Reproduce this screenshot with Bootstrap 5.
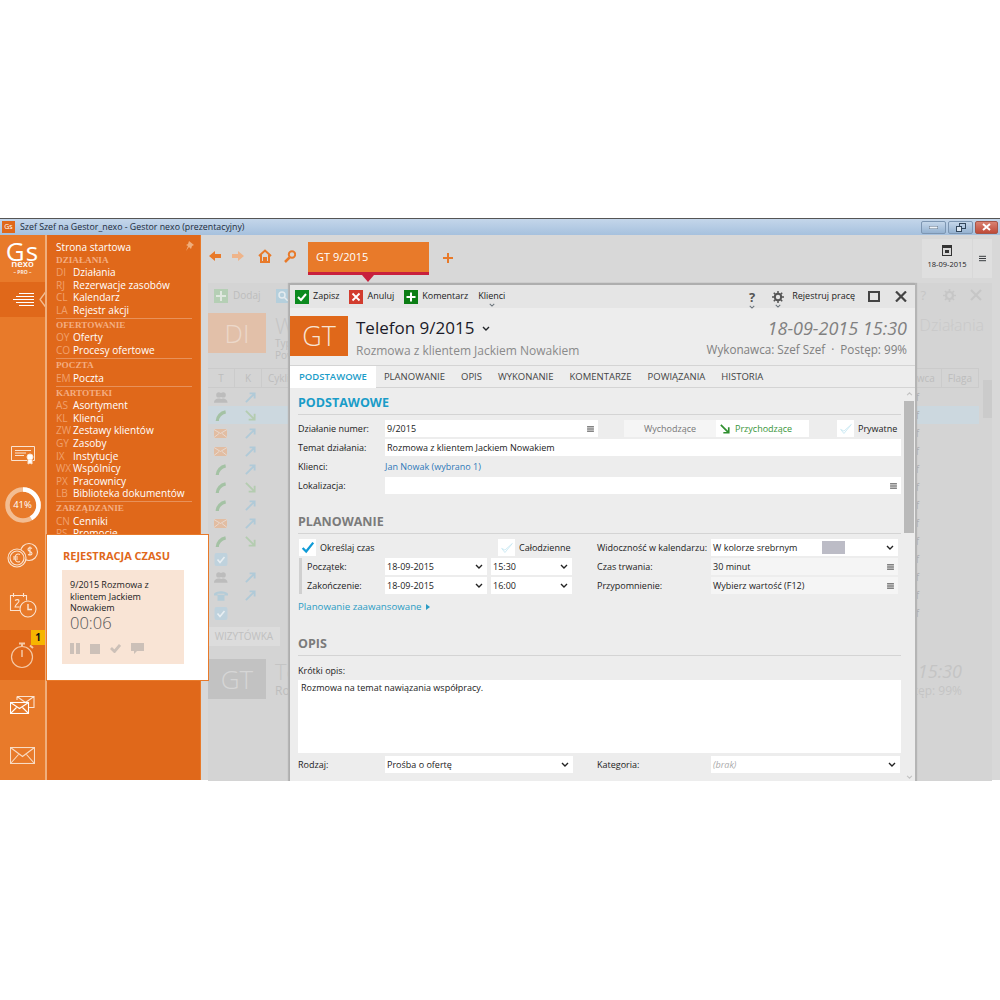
<!DOCTYPE html>
<html lang="pl">

<head>
    <meta charset="UTF-8">
    <meta name="viewport" content="width=device-width, initial-scale=1.0">
    <title>Gestor nexo</title>
    <link href="https://cdn.jsdelivr.net/npm/bootstrap@5.3.2/dist/css/bootstrap.min.css" rel="stylesheet">
    <style>
        body {
            background: #fff;
            font-family: "Open Sans", "Liberation Sans", sans-serif;
            font-size: 9px;
            line-height: 1.2;
            color: #222;
        }

        .app-win {
            margin-top: 218px;
            height: 563px;
            overflow: hidden;
        }

        /* title bar */
        .win-title {
            height: 17px;
            border-top: 1px solid #555;
            background: linear-gradient(#c4d6ea, #a6c1de);
            padding-left: 2px;
            font-size: 8.8px;
            color: #1c2a3a;
        }

        .gs-ico {
            width: 13px;
            height: 12px;
            background: #e0681a;
            color: #fff;
            font-size: 7px;
            line-height: 12px;
            text-align: center;
            margin-right: 5px;
        }

        .win-btn {
            height: 13px;
            margin-right: 2px;
            border: 1px solid #7d96b2;
            border-radius: 2px;
            background: linear-gradient(#c5d7ea, #95b2d1);
        }

        .win-btn.w25 { width: 25px; }
        .win-btn.w-close { width: 23px; background: linear-gradient(#d98272, #bf4a38); border-color: #a65648; }

        /* left rail */
        .main-row { height: 545px; }

        .rail {
            width: 45px;
            background: #e87a2a;
            flex: none;
        }

        .rail-logo {
            height: 47px;
            color: #fff;
            text-align: center;
            padding-top: 7px;
        }

        .logo-gs { font-size: 26px; line-height: 18px; letter-spacing: 1px; }
        .logo-nx { font-size: 9.5px; line-height: 8px; font-weight: 600; }
        .logo-pro { font-size: 5px; line-height: 8px; font-weight: 700; opacity: .85; }

        .rail-burger {
            height: 35px;
            background: #e0681a;
            position: relative;
        }

        .rail-notch {
            position: absolute;
            right: -2px;
            top: 9px;
        }

        .rail-item {
            height: 50px;
            position: relative;
        }

        .rail-item.on { background: #e0681a; }

        .rail-badge {
            position: absolute;
            right: 0;
            top: 0;
            width: 14px;
            height: 15px;
            background: #f7b500;
            color: #111;
            font-weight: 700;
            font-size: 10px;
            line-height: 15px;
            text-align: center;
        }

        .rail-pct {
            position: absolute;
            inset: 0;
            color: #fff;
            font-size: 9.5px;
            line-height: 50px;
            text-align: center;
        }

        /* orange menu */
        .menu-col {
            width: 155px;
            flex: none;
            background: #e0681a;
            border-left: 2px solid #f0ae7c;
            padding: 6px 8px 0 9px;
            color: #fff;
            font-size: 10.1px;
            line-height: 12.55px;
            overflow: hidden;
            position: relative;
        }

        .menu-pin { position: absolute; right: 6px; top: 6px; }

        .menu-grp {
            border-bottom: 1px solid #e8915a;
            padding-bottom: 1.6px;
        }

        .menu-grp:last-child { border: 0; }

        .menu-h {
            font-family: "Liberation Serif", serif;
            font-weight: 700;
            font-size: 9.2px;
            color: #f4ae82;
        }

        .menu-code {
            width: 17px;
            color: #f0a06c;
            flex: none;
        }

        /* time popup */
        .time-pop {
            position: absolute;
            left: 46px;
            top: 316px;
            width: 163px;
            height: 147px;
            background: #fff;
            border: 1px solid #e87a2a;
            padding: 14px 15px;
        }

        .time-h {
            color: #e0681a;
            font-weight: 700;
            font-size: 11px;
            line-height: 13px;
            margin: 0 0 8px 1px;
        }

        .time-card {
            width: 122px;
            height: 94px;
            background: #f9e4d5;
            padding: 9px 8px;
            font-size: 9px;
            line-height: 11.7px;
        }

        .time-val {
            font-size: 16.5px;
            line-height: 17px;
            font-weight: 300;
            color: #555;
        }

        .time-acts { margin-top: 12px; gap: 10px; }

        /* content */
        .cnt {
            position: relative;
            background: #d8d8d8;
            border-left: 1px solid #e87a2a;
            min-width: 0;
        }

        .top-bar {
            height: 48px;
            padding: 7px 8px 0 8px;
        }

        .t-nav { margin-right: 12px; margin-top: 8px; }

        .doc-tab {
            width: 121px;
            height: 33px;
            background: #e87a2a;
            border-bottom: 3px solid #c8203c;
            color: #fff;
            font-size: 11px;
            line-height: 30px;
            padding-left: 8px;
            position: relative;
        }

        .doc-tab::after {
            content: "";
            position: absolute;
            left: 54px;
            bottom: -10px;
            border: 6px solid transparent;
            border-bottom: 0;
            border-top: 7px solid #c8203c;
        }

        .date-box {
            width: 50px;
            height: 39px;
            margin: -3px 1px 0 0;
            background: #dfdfdf;
            font-size: 7.5px;
            text-align: center;
            padding-top: 6px;
        }

        .menu-box {
            width: 19px;
            height: 39px;
            margin-top: -3px;
            background: #dfdfdf;
        }

        /* dimmed page behind the dialog */
        .back-pane {
            margin: 0 8px 0 7px;
            height: 498px;
            background: #d4d4d4;
            color: #bdbdbd;
            overflow: hidden;
        }

        .back-bar { height: 30px; padding: 6px 6px 0 6px; font-size: 10px; }
        .back-sq { width: 14px; height: 14px; flex: none; margin-right: 5px; }
        .back-head { height: 55px; }
        .back-tile { width: 58px; height: 40px; background: #e2c0a9; color: #ecd8ca; font-size: 26px; line-height: 40px; text-align: center; font-weight: 300; flex: none; }
        .back-txt { margin-left: 9px; font-size: 10px; line-height: 12px; }
        .back-big { font-size: 22px; line-height: 24px; color: #c4c4c4; font-weight: 300; }
        .back-title { font-size: 16px; line-height: 24px; color: #c9c9c9; padding: 0 8px 0 0; font-weight: 300; }

        .grid-h {
            height: 20px;
            border-top: 1px solid #cbcbcb;
            border-bottom: 1px solid #cbcbcb;
            font-size: 10px;
            line-height: 18px;
            width: 771px;
        }

        .grid-h span { padding: 0 6px; border-right: 1px solid #cbcbcb; }
        .cell-t { width: 27px; text-align: center; padding: 0 !important; }

        .grid-row { height: 18px; width: 771px; padding-left: 6px; }
        .grid-row.sel { background: #ccd8df; }
        .row-t { width: 31px; }
        .row-f { margin-left: auto; margin-right: 60px; color: #aeaeae; font-size: 10px; }

        .back-scroll { width: 9px; margin-left: 4px; position: relative; }
        .back-thumb { height: 38px; background: #cbcbcb; margin-top: 12px; }

        .card-tab { height: 19px; width: 72px; background: #dcdcdc; color: #c0c0c0; font-size: 10px; line-height: 19px; text-align: center; margin-top: 5px; }
        .card-head { margin-top: 13px; }
        .card-right { text-align: right; padding-right: 30px; }

        /* dialog */
        .dlg {
            position: absolute;
            left: 88px;
            top: 48px;
            width: 626px;
            height: 498px;
            background: #ededed;
            border-top: 2px solid #aeaeae;
            border-left: 1px solid #aeaeae;
            box-shadow: -1px 0 1px #b5b5b5, 2px 0 1px #b5b5b5;
            overflow: hidden;
        }

        .dlg-bar {
            height: 23px;
            background: #e5e5e5;
            padding: 0 8px 0 5px;
        }

        .bar-sq {
            width: 14px;
            height: 14px;
            margin-right: 4px;
            flex: none;
        }

        .bar-txt { margin-right: 10px; font-size: 9px; }
        .has-chev { position: relative; }
        .chev-under { position: absolute; left: 50%; margin-left: -3px; bottom: -5px; }

        .dlg-head { height: 57px; padding-top: 8px; position: relative; }

        .dlg-tile {
            width: 58px;
            height: 40px;
            background: #e0681a;
            color: #f8e4d4;
            font-size: 27px;
            line-height: 40px;
            text-align: center;
            font-weight: 300;
            flex: none;
        }

        .dlg-title { font-size: 17px; line-height: 22px; color: #1a1a28; margin-top: 1px; }
        .dlg-sub { font-size: 12px; line-height: 15px; color: #8a8a8a; margin-top: 4px; }
        .dlg-right { margin-left: auto; text-align: right; padding-right: 8px; color: #808080; }
        .dlg-date { font-size: 18px; line-height: 22px; font-style: italic; margin-top: 1px; }
        .dlg-who { font-size: 11.7px; line-height: 15px; margin-top: 3px; }

        .tab-strip {
            height: 23px;
            border-top: 1px solid #d4d4d4;
            border-bottom: 1px solid #d4d4d4;
        }

        .tab-strip .nav-link {
            padding: 0 8px;
            color: #444;
            font-size: 9.5px;
            line-height: 21px;
            height: 22px;
        }

        .tab-strip .nav-link.active {
            background: #fff;
            color: #1a9cc8;
            font-weight: 600;
            padding: 0 9px;
        }

        .form-wrap { padding-left: 8px; width: 611px; flex: none; }

        .sec-h {
            height: 20px;
            margin-top: 7px;
            margin-bottom: 5px;
            border-bottom: 1px solid #d4d4d4;
            font-size: 12.5px;
            line-height: 15px;
            font-weight: 700;
            color: #7b7b7b;
        }

        .sec-h.first { color: #1a9cc8; }

        .f-row { height: 17px; margin-bottom: 2px; line-height: 18px; }
        .f-lbl { width: 87px; flex: none; color: #222; }
        .f-lbl-r { width: 114px; flex: none; }

        .fld {
            height: 17px;
            background: #fff;
            line-height: 17px;
            padding: 0 4px 0 2px;
            flex: none;
        }

        .fld.soft { background: #f5f5f5; }
        .w-213 { width: 213px; }
        .w-516 { width: 516px; }
        .w-102 { width: 102px; }
        .w-81 { width: 81px; }
        .w-188 { width: 188px; }
        .w-187 { width: 187px; }
        .w-189 { width: 189px; }

        .tog-box { width: 92px; text-align: center; line-height: 17px; height: 17px; background: #f5f5f5; color: #777; margin-left: 26px; }
        .tog-on { width: 93px; line-height: 17px; height: 17px; padding-left: 4px; gap: 5px; background: #fff; color: #3a963a; }

        .chk {
            width: 17px;
            height: 17px;
            background: #fff;
            flex: none;
            margin-right: 4px;
        }

        .chk-lead { padding-left: 1px; width: 200px; }
        .plan-left { width: 275px; margin-right: 24px; flex: none; }
        .plan-sub { border-left: 3px solid #d0d0d0; margin-left: 1px; padding-left: 5px; }
        .plan-sub .f-lbl { width: 78px; }
        .link-teal { color: #2a9cc4; font-size: 9.7px; line-height: 17px; margin-top: 4px; }
        .link-blue { color: #2e78b8; }

        .txt-area { height: 73px; background: #fff; width: 603px; padding: 3px; margin-bottom: 3px; }
        .swatch { width: 23px; height: 13px; background: #bcbcc6; margin-left: 25px; }
        .brak { color: #aaa; font-style: italic; }

        .dlg-scroll { width: 10px; margin-left: 3px; position: relative; }
        .dlg-thumb { height: 132px; background: #b9b9b9; margin-top: 13px; }
    </style>
</head>

<body>
    <svg width="0" height="0" class="position-absolute">
        <symbol id="chev" viewBox="0 0 8 5"><path d="M1 1l3 3 3-3" fill="none" stroke="currentColor" stroke-width="1.4" /></symbol>
        <symbol id="lines" viewBox="0 0 8 7"><path d="M0 1h8M0 3.500h8M0 6h8" stroke="currentColor" stroke-width="1" /></symbol>
        <symbol id="tick" viewBox="0 0 17 17"><path d="M3 9l4 4 8-10" fill="none" stroke="currentColor" stroke-width="2.600" /></symbol>
        <symbol id="tick-thin" viewBox="0 0 17 17"><path d="M2 9l4 5 9-11-9 8z" fill="none" stroke="currentColor" stroke-width="1" /></symbol>
        <symbol id="phone" viewBox="0 0 14 14"><path d="M3 13C3 8 7 4 12 3" fill="none" stroke="currentColor" stroke-width="3.500" /></symbol>
        <symbol id="mail" viewBox="0 0 14 10"><rect width="13" height="9" y=".5" fill="currentColor" /><path d="M0 1l6.500 4L13 1M0 9l5-4M13 9L8 5" fill="none" stroke="#e9e0da" stroke-width=".8" /></symbol>
        <symbol id="arr-out" viewBox="0 0 12 12"><path d="M1 11L10 2M5 1.500h5.500V7" fill="none" stroke="currentColor" stroke-width="2" /></symbol>
        <symbol id="arr-in" viewBox="0 0 12 12"><path d="M1 1l9 9M4 10.500h6.500V4" fill="none" stroke="currentColor" stroke-width="2" /></symbol>
        <symbol id="people" viewBox="0 0 16 14"><circle cx="5.500" cy="4" r="3" fill="currentColor" /><circle cx="10.500" cy="4" r="3" fill="currentColor" /><path d="M0 13c0-4 3-5 5.500-5s5 1 5 5zM6 13c0-4 3-5 4.500-5s5 1 5 5z" fill="currentColor" /></symbol>
        <symbol id="desk" viewBox="0 0 16 14"><path d="M0 5c2-4 14-4 16 0l0 2h-4V5H4v2H0zM4 6h8v7H4z" fill="currentColor" /></symbol>
        <symbol id="boxchk" viewBox="0 0 13 13"><rect width="13" height="13" rx="2" fill="currentColor" /><path d="M3 6.500l2.500 3L10 4" fill="none" stroke="#e8eef2" stroke-width="1.600" /></symbol>
        <symbol id="gear" viewBox="0 0 12 12"><circle cx="6" cy="6" r="3.200" fill="none" stroke="currentColor" stroke-width="2" /><path d="M6 0v2.500M6 9.500V12M0 6h2.500M9.500 6H12M1.800 1.800l1.800 1.800M8.400 8.400l1.800 1.800M10.200 1.800L8.400 3.600M3.600 8.400l-1.800 1.800" stroke="currentColor" stroke-width="1.500" /></symbol>
    </svg>

    <div class="app-win position-relative">
        <!-- Title bar -->
        <div class="win-title d-flex align-items-center">
            <div class="gs-ico">Gs</div>
            <div>Szef Szef na Gestor_nexo - Gestor nexo (prezentacyjny)</div>
            <div class="ms-auto d-flex">
                <div class="win-btn w25 d-flex align-items-center justify-content-center"><svg width="9" height="3"><rect width="9" height="3" fill="#eef3f8" stroke="#5d7186" /></svg></div>
                <div class="win-btn w25 d-flex align-items-center justify-content-center"><svg width="10" height="9" fill="none" stroke="#33475c"><rect x="3.500" y=".5" width="6" height="5" /><rect x=".5" y="3.500" width="5" height="5" fill="#dde7f1" /></svg></div>
                <div class="win-btn w-close d-flex align-items-center justify-content-center"><svg width="9" height="8"><path d="M1 1l7 6M8 1L1 7" stroke="#fff" stroke-width="2" /></svg></div>
            </div>
        </div>

        <div class="main-row d-flex">
            <!-- Left rail -->
            <div class="rail d-flex flex-column">
                <div class="rail-logo">
                    <div class="logo-gs">Gs</div>
                    <div class="logo-nx">nexo</div>
                    <div class="logo-pro">– PRO –</div>
                </div>
                <div class="rail-burger d-flex align-items-center justify-content-center">
                    <svg width="22" height="15" stroke="#fff" stroke-width="1"><path d="M7 1.500h15M4 4.500h18M1 7.500h21M4 10.500h18M7 13.500h15" /></svg>
                    <svg class="rail-notch" width="8" height="17" fill="none" stroke="#f3bd92" stroke-width="1.300"><path d="M7 .5L1 8.500l6 8" /></svg>
                </div>
                <div class="rail-item mt-auto d-flex align-items-center justify-content-center">
                    <svg width="26" height="20" fill="none" stroke="#fbe3d0"><path d="M17 15.500H1.500V1.500h23v14H23" /><path d="M5 5.500h16M5 8h11M5 10.500h9" /><circle cx="20" cy="12" r="3" fill="#fff" /><path d="M18 15v4l2-1 2 1v-4" fill="#fff" /></svg>
                </div>
                <div class="rail-item d-flex align-items-center justify-content-center">
                    <svg width="38" height="38" fill="none" stroke-width="4.500"><circle cx="19" cy="19" r="15.500" stroke="#f3bd92" /><circle cx="19" cy="19" r="15.500" stroke="#fff" stroke-dasharray="39.900 97.400" transform="rotate(-90 19 19)" /></svg>
                    <div class="rail-pct">41%</div>
                </div>
                <div class="rail-item d-flex align-items-center justify-content-center">
                    <svg width="32" height="26" fill="none" stroke="#fbe3d0" stroke-width="1.100"><circle cx="22" cy="10" r="8.500" fill="#e87a2a" /><circle cx="10" cy="16" r="9" fill="#e87a2a" /><circle cx="10" cy="16" r="7" /><path d="M13 12.500c-3-1.500-5 .5-5 3.500s2 5 5 3.500M6 15h5M6 17h5" /><path d="M25 6.500c-2-1.500-4-.5-4 1 0 2.500 4 1.500 4 4 0 1.500-2 2-4 1M23 4.500v9" /></svg>
                </div>
                <div class="rail-item d-flex align-items-center justify-content-center">
                    <svg width="28" height="26" fill="none" stroke="#fbe3d0" stroke-width="1.100"><path d="M12 18.500H1.500V3.500h16v5M4.500 1v4M14.500 1v4" /><path d="M6 8.500c2-1.500 4-1 4 .5 0 2-4 3.500-4 6h4.500" /><circle cx="19" cy="17" r="8" fill="#e87a2a" /><path d="M19 12v5.500h4" stroke-width="1.400" /></svg>
                </div>
                <div class="rail-item on d-flex align-items-center justify-content-center">
                    <div class="rail-badge">1</div>
                    <svg width="26" height="28" fill="none" stroke="#f5c9a6" stroke-width="1.200"><circle cx="12" cy="16" r="10.500" /><path d="M12 9v7" stroke-width="1.500" /><path d="M9 2.500h6M12 3v2.500M20 4.500l3 2.500" stroke-width="2" /></svg>
                </div>
                <div class="rail-item d-flex align-items-center justify-content-center">
                    <svg width="25" height="18" fill="none" stroke="#fbe3d0" stroke-width="1.100"><path d="M7 .5h17v11h-6M7 .5V4M7 .5l8.500 6L24 .5" /><rect x=".5" y="6.500" width="18" height="11" fill="#e87a2a" stroke="#fff" /><path d="M.5 6.500l9 6 9-6M.5 17.500l6-6M18.500 17.500l-6-6" stroke="#fff" /></svg>
                </div>
                <div class="rail-item d-flex align-items-center justify-content-center">
                    <svg width="25" height="17" fill="none" stroke="#f8dcc5" stroke-width="1.100"><rect x=".5" y=".5" width="24" height="16" /><path d="M.5 .5l12 9 12-9M.5 16.500l8-9M24.500 16.500l-8-9" /></svg>
                </div>
            </div>

            <!-- Orange menu -->
            <div class="menu-col">
                <svg class="menu-pin" width="10" height="10" fill="#f0ae7c"><path d="M5 0l5 4-2 1-1 3-2-2-3 4 2-5-2-1 2-1z" /></svg>
                <div class="mb-0">Strona startowa</div>
                <div class="menu-grp">
                    <div class="menu-h">DZIAŁANIA</div>
                    <div class="d-flex"><span class="menu-code">DI</span>Działania</div>
                    <div class="d-flex"><span class="menu-code">RJ</span>Rezerwacje zasobów</div>
                    <div class="d-flex"><span class="menu-code">CL</span>Kalendarz</div>
                    <div class="d-flex"><span class="menu-code">LA</span>Rejestr akcji</div>
                </div>
                <div class="menu-grp">
                    <div class="menu-h">OFERTOWANIE</div>
                    <div class="d-flex"><span class="menu-code">OY</span>Oferty</div>
                    <div class="d-flex"><span class="menu-code">CO</span>Procesy ofertowe</div>
                </div>
                <div class="menu-grp">
                    <div class="menu-h">POCZTA</div>
                    <div class="d-flex"><span class="menu-code">EM</span>Poczta</div>
                </div>
                <div class="menu-grp">
                    <div class="menu-h">KARTOTEKI</div>
                    <div class="d-flex"><span class="menu-code">AS</span>Asortyment</div>
                    <div class="d-flex"><span class="menu-code">KL</span>Klienci</div>
                    <div class="d-flex"><span class="menu-code">ZW</span>Zestawy klientów</div>
                    <div class="d-flex"><span class="menu-code">GY</span>Zasoby</div>
                    <div class="d-flex"><span class="menu-code">IX</span>Instytucje</div>
                    <div class="d-flex"><span class="menu-code">WX</span>Wspólnicy</div>
                    <div class="d-flex"><span class="menu-code">PX</span>Pracownicy</div>
                    <div class="d-flex"><span class="menu-code">LB</span>Biblioteka dokumentów</div>
                </div>
                <div class="menu-grp">
                    <div class="menu-h">ZARZĄDZANIE</div>
                    <div class="d-flex"><span class="menu-code">CN</span>Cenniki</div>
                    <div class="d-flex"><span class="menu-code">PS</span>Promocje</div>
                </div>
            </div>

            <!-- Content -->
            <div class="cnt flex-grow-1">
                <div class="top-bar d-flex">
                    <svg class="t-nav" width="12" height="12" fill="#e87a2a" style="margin-right:11px"><path d="M0 6l6-5v3h6v4H6v3z" /></svg>
                    <svg class="t-nav" width="12" height="12" fill="#eeb48a" style="margin-right:14px"><path d="M12 6L6 1v3H0v4h6v3z" /></svg>
                    <svg class="t-nav" width="14" height="14" fill="none" stroke="#e87a2a" stroke-width="2" style="margin-top:7px"><path d="M1 7l6-5.500L13 7M3 6v7h8V6M6 13V9h2v4" /></svg>
                    <svg class="t-nav" width="12" height="13" fill="none" stroke="#e87a2a" stroke-width="2"><circle cx="8" cy="4.500" r="3.200" /><path d="M5.500 7.500L1 12" stroke-width="2.500" /></svg>
                    <div class="doc-tab">GT 9/2015</div>
                    <svg width="10" height="10" fill="#e87a2a" style="margin:11px 0 0 14px"><path d="M4 0h2v4h4v2H6v4H4V6H0V4h4z" /></svg>
                    <div class="ms-auto d-flex">
                        <div class="date-box">
                            <svg class="d-block mx-auto mb-1" width="10" height="11"><rect width="10" height="11" fill="#333" /><rect x="1" y="3" width="8" height="7" fill="#d8d8d8" /><rect x="3" y="5" width="4" height="3" fill="#333" /></svg>
                            18-09-2015
                        </div>
                        <div class="menu-box d-flex align-items-center justify-content-center text-dark"><svg width="7" height="7"><use href="#lines" /></svg></div>
                    </div>
                </div>

                <!-- Dimmed list behind the dialog -->
                <div class="back-pane">
                    <div class="back-bar d-flex">
                        <div class="back-sq d-flex align-items-center justify-content-center" style="background:#b5cfb5"><svg width="10" height="10" fill="#e0e8e0"><path d="M4 0h2v4h4v2H6v4H4V6H0V4h4z" /></svg></div>
                        <span class="me-3">Dodaj</span>
                        <div class="back-sq d-flex align-items-center justify-content-center" style="background:#b5cfdc"><svg width="10" height="10" fill="none" stroke="#e4ebef" stroke-width="1.500"><circle cx="4" cy="4" r="3" /><path d="M6 6l4 4" /></svg></div>
                        <span>P</span>
                        <div class="ms-auto d-flex align-items-start pe-1" style="color:#c6c6c6;font-size:13px;line-height:13px">
                            <span style="margin-right:17px">?</span>
                            <svg width="13" height="13" style="margin-right:14px"><use href="#gear" /></svg>
                            <svg width="12" height="12" stroke="#c6c6c6" stroke-width="2.200"><path d="M1 1l10 10M11 1L1 11" /></svg>
                        </div>
                    </div>
                    <div class="back-head d-flex">
                        <div class="back-tile">DI</div>
                        <div class="back-txt">
                            <div class="back-big">W</div>
                            <div>Typ</div>
                            <div>Pow</div>
                        </div>
                        <div class="back-title ms-auto align-self-start">Działania</div>
                    </div>
                    <div class="d-flex">
                        <div>
                            <div class="grid-h d-flex">
                                <span class="cell-t">T</span><span class="cell-t">K</span><span>Cyklic</span>
                                <span class="ms-auto">nawca</span><span>Flaga</span>
                            </div>
                            <div id="grid-rows"></div>
                        </div>
                        <div class="back-scroll">
                            <div class="back-thumb"></div>
                        </div>
                    </div>
                    <div class="card-tab">WIZYTÓWKA</div>
                    <div class="card-head d-flex">
                        <div class="back-tile" style="background:#c2c2c2;color:#d6d6d6">GT</div>
                        <div class="back-txt">
                            <div class="back-big">Te</div>
                            <div style="font-size:12px;line-height:16px">Ro</div>
                        </div>
                        <div class="card-right ms-auto" style="color:#c4c4c4">
                            <div style="font-size:18px;line-height:24px;font-style:italic">15:30</div>
                            <div style="font-size:12px;line-height:15px">tęp: 99%</div>
                        </div>
                    </div>
                </div>

                <!-- Dialog -->
                <div class="dlg d-flex flex-column">
                    <div class="dlg-bar d-flex align-items-center">
                        <svg class="bar-sq" width="14" height="14"><rect width="14" height="14" fill="#0b8a1e" /><path d="M3 7l3 3 5-6" fill="none" stroke="#fff" stroke-width="2" /></svg>
                        <span class="bar-txt">Zapisz</span>
                        <svg class="bar-sq" width="14" height="14"><rect width="14" height="14" fill="#d23c2e" /><path d="M3.500 3.500l7 7M10.500 3.500l-7 7" stroke="#fff" stroke-width="1.800" /></svg>
                        <span class="bar-txt">Anuluj</span>
                        <svg class="bar-sq" width="14" height="14"><rect width="14" height="14" fill="#0b7d14" /><path d="M7 2.500v9M2.500 7h9" stroke="#fff" stroke-width="2" /></svg>
                        <span class="bar-txt">Komentarz</span>
                        <span class="bar-txt has-chev">Klienci<svg class="chev-under text-secondary" width="6" height="4"><use href="#chev" /></svg></span>
                        <div class="ms-auto d-flex align-items-center">
                            <span class="has-chev" style="font-size:13px;line-height:14px;font-weight:700;color:#555;margin-right:17px">?<svg class="chev-under text-secondary" width="6" height="4"><use href="#chev" /></svg></span>
                            <span class="has-chev" style="margin-right:8px;line-height:0;color:#555"><svg width="12" height="12"><use href="#gear" /></svg><svg class="chev-under text-secondary" width="6" height="4"><use href="#chev" /></svg></span>
                            <span style="font-size:9px;margin-right:13px">Rejestruj pracę</span>
                            <svg width="12" height="11" fill="none" stroke="#444" stroke-width="2" style="margin-right:15px"><rect x="1" y="1" width="10" height="9" /></svg>
                            <svg width="12" height="11" stroke="#444" stroke-width="2.200"><path d="M1 .5l10 10M11 .5l-10 10" /></svg>
                        </div>
                    </div>

                    <div class="dlg-head d-flex">
                        <div class="dlg-tile">GT</div>
                        <div class="ms-2">
                            <div class="dlg-title d-flex align-items-center">Telefon 9/2015<svg class="ms-2 text-dark" width="8" height="5"><use href="#chev" /></svg></div>
                            <div class="dlg-sub">Rozmowa z klientem Jackiem Nowakiem</div>
                        </div>
                        <div class="dlg-right">
                            <div class="dlg-date">18-09-2015 15:30</div>
                            <div class="dlg-who">Wykonawca: Szef Szef &nbsp;·&nbsp; Postęp: 99%</div>
                        </div>
                    </div>

                    <ul class="nav tab-strip">
                        <li class="nav-item"><a class="nav-link active" href="#">PODSTAWOWE</a></li>
                        <li class="nav-item"><a class="nav-link" href="#">PLANOWANIE</a></li>
                        <li class="nav-item"><a class="nav-link" href="#">OPIS</a></li>
                        <li class="nav-item"><a class="nav-link" href="#">WYKONANIE</a></li>
                        <li class="nav-item"><a class="nav-link" href="#">KOMENTARZE</a></li>
                        <li class="nav-item"><a class="nav-link" href="#">POWIĄZANIA</a></li>
                        <li class="nav-item"><a class="nav-link" href="#">HISTORIA</a></li>
                    </ul>

                    <div class="d-flex flex-grow-1">
                        <div class="form-wrap">
                            <div class="sec-h first">PODSTAWOWE</div>
                            <div class="f-row d-flex">
                                <div class="f-lbl">Działanie numer:</div>
                                <div class="fld w-213 d-flex align-items-center justify-content-between">9/2015<svg width="7" height="6"><use href="#lines" /></svg></div>
                                <div class="tog-box">Wychodzące</div>
                                <div class="tog-on d-flex align-items-center"><svg width="10" height="10" style="color:#2f8f2f"><use href="#arr-in" /></svg>Przychodzące</div>
                                <div class="chk d-flex align-items-center justify-content-center" style="margin-left:28px;color:#c6e6f2"><svg width="14" height="14"><use href="#tick-thin" /></svg></div>
                                <div>Prywatne</div>
                            </div>
                            <div class="f-row d-flex">
                                <div class="f-lbl">Temat działania:</div>
                                <div class="fld w-516">Rozmowa z klientem Jackiem Nowakiem</div>
                            </div>
                            <div class="f-row d-flex">
                                <div class="f-lbl">Klienci:</div>
                                <div class="link-blue">Jan Nowak (wybrano 1)</div>
                            </div>
                            <div class="f-row d-flex">
                                <div class="f-lbl">Lokalizacja:</div>
                                <div class="fld w-516 d-flex align-items-center justify-content-end"><svg width="7" height="6"><use href="#lines" /></svg></div>
                            </div>

                            <div class="sec-h" style="margin-top:20px">PLANOWANIE</div>
                            <div class="d-flex">
                                <div class="plan-left">
                                    <div class="f-row d-flex">
                                        <div class="chk-lead d-flex">
                                            <div class="chk d-flex align-items-center justify-content-center" style="color:#0f9bd7"><svg width="15" height="15"><use href="#tick" /></svg></div>
                                            Określaj czas
                                        </div>
                                        <div class="chk d-flex align-items-center justify-content-center" style="color:#c6e6f2"><svg width="14" height="14"><use href="#tick-thin" /></svg></div>
                                        Całodzienne
                                    </div>
                                    <div class="plan-sub">
                                        <div class="f-row d-flex">
                                            <div class="f-lbl">Początek:</div>
                                            <div class="fld w-102 d-flex align-items-center justify-content-between me-1">18-09-2015<svg width="8" height="5"><use href="#chev" /></svg></div>
                                            <div class="fld w-81 d-flex align-items-center justify-content-between ms-0">15:30<svg width="8" height="5"><use href="#chev" /></svg></div>
                                        </div>
                                        <div class="f-row d-flex mb-0">
                                            <div class="f-lbl">Zakończenie:</div>
                                            <div class="fld w-102 d-flex align-items-center justify-content-between me-1">18-09-2015<svg width="8" height="5"><use href="#chev" /></svg></div>
                                            <div class="fld w-81 d-flex align-items-center justify-content-between">16:00<svg width="8" height="5"><use href="#chev" /></svg></div>
                                        </div>
                                    </div>
                                </div>
                                <div>
                                    <div class="f-row d-flex">
                                        <div class="f-lbl-r">Widoczność w kalendarzu:</div>
                                        <div class="fld w-187 d-flex align-items-center">W kolorze srebrnym<div class="swatch"></div><svg class="ms-auto" width="8" height="5"><use href="#chev" /></svg></div>
                                    </div>
                                    <div class="f-row d-flex">
                                        <div class="f-lbl-r">Czas trwania:</div>
                                        <div class="fld soft w-187 d-flex align-items-center justify-content-between">30 minut<svg width="7" height="6"><use href="#lines" /></svg></div>
                                    </div>
                                    <div class="f-row d-flex mb-0">
                                        <div class="f-lbl-r">Przypomnienie:</div>
                                        <div class="fld soft w-187 d-flex align-items-center justify-content-between">Wybierz wartość (F12)<svg width="7" height="6"><use href="#lines" /></svg></div>
                                    </div>
                                </div>
                            </div>
                            <div class="link-teal d-flex align-items-center gap-1">Planowanie zaawansowane<svg width="4" height="6" fill="#2a9cc4"><path d="M0 0l4 3-4 3z" /></svg></div>

                            <div class="sec-h" style="margin-top:21px">OPIS</div>
                            <div class="f-row mb-0" style="height:19px;line-height:19px">Krótki opis:</div>
                            <div class="txt-area">Rozmowa na temat nawiązania współpracy.</div>
                            <div class="f-row d-flex">
                                <div class="f-lbl">Rodzaj:</div>
                                <div class="fld w-188 d-flex align-items-center justify-content-between" style="margin-right:24px">Prośba o ofertę<svg width="8" height="5"><use href="#chev" /></svg></div>
                                <div class="f-lbl-r">Kategoria:</div>
                                <div class="fld w-189 d-flex align-items-center justify-content-between"><span class="brak">(brak)</span><svg width="8" height="5"><use href="#chev" /></svg></div>
                            </div>
                        </div>

                        <div class="dlg-scroll">
                            <svg class="d-block mx-auto position-absolute" style="top:4px;left:2px;color:#c4c4c4" width="7" height="4"><use href="#chev" transform="rotate(180 3.500 2)" /></svg>
                            <div class="dlg-thumb"></div>
                            <svg class="position-absolute" style="top:387px;left:2px;color:#c4c4c4" width="7" height="4"><use href="#chev" /></svg>
                        </div>
                    </div>
                </div>
            </div>
        </div>

        <!-- Time registration popup -->
        <div class="time-pop">
            <div class="time-h">REJESTRACJA CZASU</div>
            <div class="time-card">
                <div>9/2015 Rozmowa z<br>klientem Jackiem<br>Nowakiem</div>
                <div class="time-val">00:06</div>
                <div class="time-acts d-flex align-items-center">
                    <svg width="10" height="11" fill="#ccc0b8"><path d="M0 0h4v11H0zM6 0h4v11H6z" /></svg>
                    <svg width="10" height="10" fill="#ccc0b8"><rect width="10" height="10" /></svg>
                    <svg width="11" height="9" fill="none" stroke="#ccc0b8" stroke-width="2.800"><path d="M1 4l3.500 3.500L10 1" /></svg>
                    <svg width="13" height="11" fill="#ccc0b8"><path d="M0 0h13v8H6l-3 3V8H0z" /></svg>
                </div>
            </div>
        </div>
    </div>

    <script src="https://cdn.jsdelivr.net/npm/bootstrap@5.3.2/dist/js/bootstrap.bundle.min.js"></script>
    <script>
        // rows of the list behind the dialog: [type icon, colour, direction]
        const rows = [
            ['people', '#bcbcbc', 'out'], ['phone', '#a4c2a4', 'in'], ['mail', '#e2bda2', 'out'],
            ['mail', '#e2bda2', 'out'], ['phone', '#a4c2a4', 'out'], ['phone', '#a4c2a4', 'in'],
            ['phone', '#a4c2a4', 'out'], ['mail', '#e2bda2', 'out'], ['phone', '#a4c2a4', 'in'],
            ['boxchk', '#bfd2dd', ''], ['people', '#bcbcbc', 'out'], ['desk', '#b4ccd8', 'out'],
            ['boxchk', '#bfd2dd', '']
        ];
        const gridRows = document.getElementById('grid-rows');
        rows.forEach((r, i) => {
            const dir = r[2] === 'out' ? '<svg width="11" height="11" style="color:#b0cad8"><use href="#arr-out"/></svg>'
                : r[2] === 'in' ? '<svg width="11" height="11" style="color:#b4ccb0"><use href="#arr-in"/></svg>' : '';
            gridRows.innerHTML += `
                <div class="grid-row d-flex align-items-center ${i === 1 ? 'sel' : ''}">
                    <div class="row-t" style="color:${r[1]}"><svg class="d-block" width="14" height="13"><use href="#${r[0]}"/></svg></div>
                    <div>${dir}</div>
                    <div class="row-f">f</div>
                </div>`;
        });
    </script>
</body>

</html>
